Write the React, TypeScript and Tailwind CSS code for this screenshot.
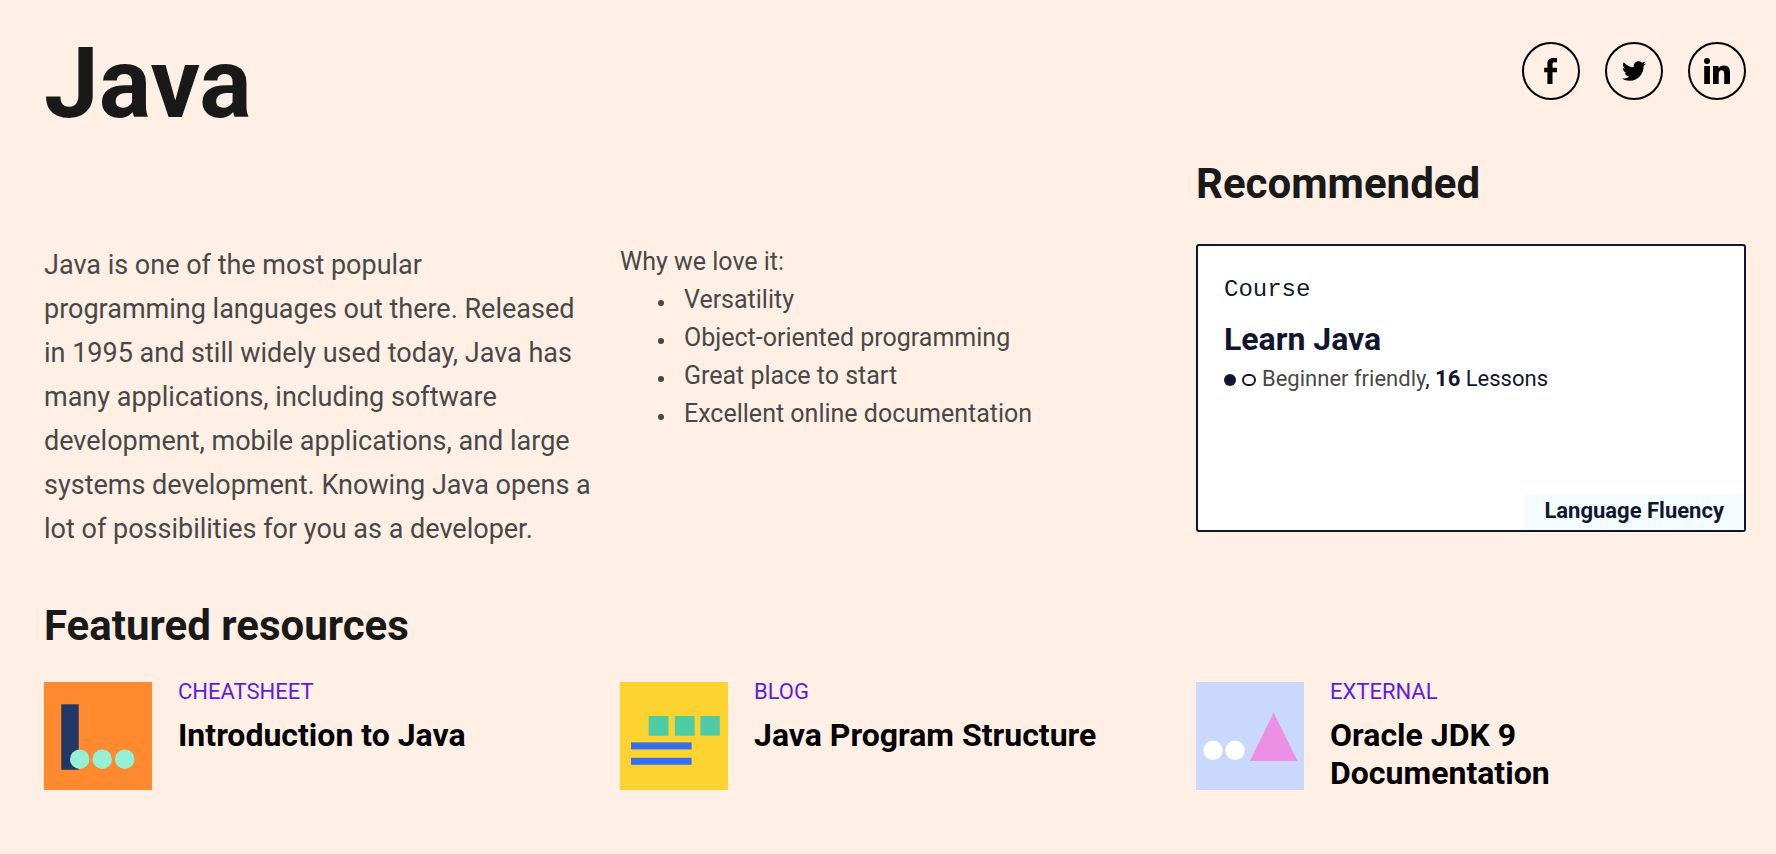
import type { ReactNode } from "react";
import { FaTwitter } from "react-icons/fa";

const reasons = [
  "Versatility",
  "Object-oriented programming",
  "Great place to start",
  "Excellent online documentation",
];

function SocialLink({ label, children }: { label: string; children: ReactNode }) {
  return (
    <a
      href="#"
      aria-label={label}
      className="flex size-[58px] items-center justify-center rounded-full border-2 border-black text-black"
    >
      {children}
    </a>
  );
}

function FacebookGlyph() {
  return (
    <svg viewBox="0 0 14 26" className="h-[26px] w-[14px]" fill="currentColor" aria-hidden="true">
      <path d="M3.4 26V14.2H0.2V9.8h3.2V6.2C3.4 2.2 5.3 0 9 0h4v4.2h-2.4c-1.6 0-2.1.6-2.1 2.1v3.5H13v4.4H8.5V26z" />
    </svg>
  );
}

function LinkedInGlyph() {
  return (
    <svg viewBox="0 0 26 26" className="size-[26px]" fill="currentColor" aria-hidden="true">
      <circle cx="3" cy="3" r="3" />
      <rect x="0.2" y="8" width="5.7" height="18" />
      <path d="M9 8h5.5v2.5c.9-1.7 2.8-3 5.4-3 4.8 0 6.1 3 6.1 7.4V26h-5.8v-9.6c0-2.4-.4-4.2-2.6-4.2-2.3 0-2.9 1.8-2.9 4.1V26H9z" />
    </svg>
  );
}

function CheatsheetArt() {
  return (
    <svg viewBox="0 0 108 108" className="size-[108px] shrink-0" aria-hidden="true">
      <rect width="108" height="108" fill="#ff8a30" />
      <rect x="17.3" y="22.3" width="17.4" height="65.5" fill="#213765" />
      <circle cx="35.7" cy="77.2" r="9.7" fill="#95f1d5" />
      <circle cx="58.2" cy="77.2" r="9.7" fill="#95f1d5" />
      <circle cx="80.7" cy="77.2" r="9.7" fill="#95f1d5" />
    </svg>
  );
}

function BlogArt() {
  return (
    <svg viewBox="0 0 108 108" className="size-[108px] shrink-0" aria-hidden="true">
      <rect width="108" height="108" fill="#fdd42f" />
      <g fill="#4ecca3">
        <rect x="28.7" y="34" width="19.8" height="19.8" />
        <rect x="54.8" y="34" width="19.8" height="19.8" />
        <rect x="80.4" y="34" width="19.4" height="19.6" />
      </g>
      <g fill="#366ef0">
        <rect x="11" y="60.4" width="60.6" height="7" />
        <rect x="11" y="75.8" width="60.6" height="7" />
      </g>
    </svg>
  );
}

function ExternalArt() {
  return (
    <svg viewBox="0 0 108 108" className="size-[108px] shrink-0" aria-hidden="true">
      <rect width="108" height="108" fill="#cad8fb" />
      <circle cx="17" cy="68.3" r="9.7" fill="#fff" />
      <circle cx="39" cy="68.3" r="9.7" fill="#fff" />
      <path d="M77.7 30.5 101.4 79H53.8z" fill="#ec90e6" />
    </svg>
  );
}

const resources = [
  { kind: "CHEATSHEET", title: "Introduction to Java", art: <CheatsheetArt /> },
  { kind: "BLOG", title: "Java Program Structure", art: <BlogArt /> },
  { kind: "EXTERNAL", title: "Oracle JDK 9 Documentation", art: <ExternalArt /> },
];

export default function App() {
  return (
    <main className="min-h-screen bg-[#ffefe5] pt-8 pr-[30px] pb-16 pl-11 font-['Roboto',sans-serif] text-[#484848]">
      <header className="flex items-start justify-between">
        <h1 className="text-[98px] leading-[104px] font-bold text-[#191919]">Java</h1>
        <nav aria-label="Share" className="mt-[10px] flex gap-[25px]">
          <SocialLink label="Facebook">
            <FacebookGlyph />
          </SocialLink>
          <SocialLink label="Twitter">
            <FaTwitter className="size-6" />
          </SocialLink>
          <SocialLink label="LinkedIn">
            <LinkedInGlyph />
          </SocialLink>
        </nav>
      </header>

      <div className="mt-[22px] grid grid-cols-3 gap-[26px]">
        <p className="pt-[85px] text-[27px] leading-[44px]">
          Java is one of the most popular
          <br />
          programming languages out there. Released in 1995 and still widely used today, Java has
          many applications, including software development, mobile applications, and large
          systems development. Knowing Java opens a lot of possibilities for you as a developer.
        </p>

        <div className="pt-[85px] text-[25px] leading-[38px]">
          <p>Why we love it:</p>
          <ul>
            {reasons.map((reason) => (
              <li key={reason} className="flex items-center gap-5 pl-[38px]">
                <span className="mt-[6px] size-[6px] rounded-full bg-[#484848]" />
                {reason}
              </li>
            ))}
          </ul>
        </div>

        <section>
          <h2 className="text-[42px] leading-[52px] font-bold text-[#191919]">Recommended</h2>
          <a
            href="#"
            className="mt-[34px] flex min-h-[288px] flex-col rounded-[3px] border-2 border-[#10162f] bg-white text-[#10162f]"
          >
            <div className="px-[26px] pt-7">
              <p className="font-['Liberation_Mono',monospace] text-2xl leading-8">Course</p>
              <h3 className="mt-[13px] text-[32px] leading-10 font-bold">Learn Java</h3>
              <div className="mt-[6px] flex items-center text-[22px] leading-7">
                <span className="mt-[2px] mr-[6px] size-3 rounded-full bg-[#10162f]" />
                <span className="mt-[2px] mr-[6px] h-3 w-[14px] rounded-full border-2 border-[#10162f]" />
                <p>
                  <span className="text-[#484848]">Beginner friendly</span>, <b>16</b> Lessons
                </p>
              </div>
            </div>
            <p className="mt-auto self-end bg-[#f5fcff] px-5 pb-[2px] text-[22px] leading-[34px] font-bold">
              Language Fluency
            </p>
          </a>
        </section>
      </div>

      <section className="mt-[49px]">
        <h2 className="text-[42px] leading-[52px] font-bold text-[#191919]">Featured resources</h2>
        <ul className="mt-[30px] grid grid-cols-3 gap-[26px]">
          {resources.map((r) => (
            <li key={r.kind}>
              <a href="#" className="flex gap-[26px]">
                {r.art}
                <div className="max-w-[360px]">
                  <p className="text-[22px] leading-5 text-[#5f1be3]">{r.kind}</p>
                  <h3 className="mt-[14px] text-[32px] leading-[38px] font-bold text-black">
                    {r.title}
                  </h3>
                </div>
              </a>
            </li>
          ))}
        </ul>
      </section>
    </main>
  );
}
